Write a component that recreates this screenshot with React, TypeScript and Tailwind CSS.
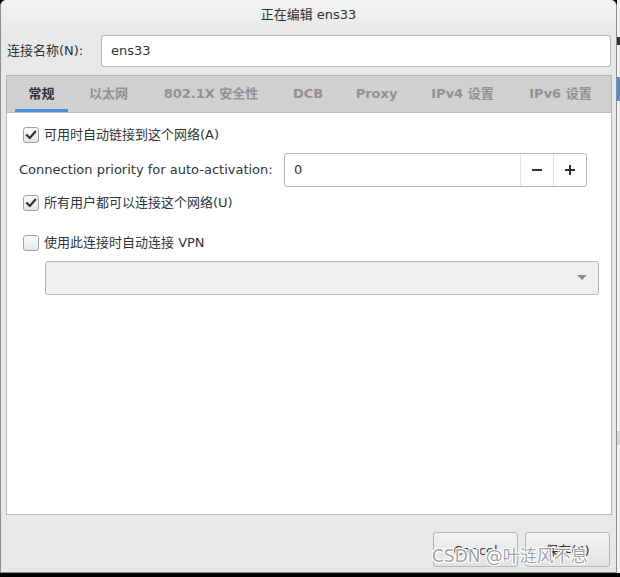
import React from "react";

const FONT = { fontFamily: '"DejaVu Sans", "Noto Sans CJK SC", sans-serif' };

function CheckBox({ checked }: { checked: boolean }) {
  return (
    <div className="w-[16px] h-[16px] rounded-[3px] border border-[#a1a1a1] bg-gradient-to-b from-[#fcfcfc] to-[#e6e6e6] flex items-center justify-center shrink-0">
      {checked && (
        <svg width="12" height="12" viewBox="0 0 12 12">
          <path d="M2 6.2 L4.8 9 L10.2 2.8" fill="none" stroke="#2e3436" strokeWidth="2.2" strokeLinecap="square" />
        </svg>
      )}
    </div>
  );
}

const tabs: { label: string; w: string; active?: boolean }[] = [
  { label: "常规", w: "w-[53px]", active: true },
  { label: "以太网", w: "w-[67px]" },
  { label: "802.1X 安全性", w: "w-[124px]" },
  { label: "DCB", w: "w-[56px]" },
  { label: "Proxy", w: "w-[67px]" },
  { label: "IPv4 设置", w: "w-[91px]" },
  { label: "IPv6 设置", w: "w-[91px]" },
];

export default function App() {
  return (
    <div className="w-[620px] h-[577px] bg-black flex flex-col overflow-hidden text-[13px] text-[#2e3436]" style={FONT}>
      <div className="flex h-[573px]">
        <div className="w-[617px] h-full flex flex-col bg-[#e8e8e8] border-l border-r border-b border-[#8f8f8f] rounded-t-[6px] relative">
          {/* title bar */}
          <div className="h-[30px] shrink-0 rounded-t-[6px] bg-gradient-to-b from-[#f4f4f4] to-[#e8e8e8] flex items-center justify-center">
            <span>正在编辑 ens33</span>
          </div>
          {/* name row */}
          <div className="mt-[5px] h-[32px] flex items-center shrink-0">
            <div className="w-[100px] pl-[6px]">连接名称(N):</div>
            <div className="w-[510px] h-[32px] bg-white border border-[#b6b6b3] rounded-[3px] flex items-center pl-[9px]">
              ens33
            </div>
          </div>
          {/* notebook */}
          <div className="mt-[8px] ml-[5px] w-[606px] h-[440px] border border-[#b6b6b3] flex flex-col shrink-0">
            <div className="h-[37px] bg-[#d0d0d0] border-b border-[#bdbdbd] flex items-stretch pl-[8px] gap-[7px] shrink-0">
              {tabs.map((t) => (
                <div
                  key={t.label}
                  className={`${t.w} flex items-center justify-center font-bold ${
                    t.active ? "text-[#2e3436] border-b-[3px] border-[#4a90d9] pt-[3px]" : "text-[#929292]"
                  }`}
                >
                  {t.label}
                </div>
              ))}
            </div>
            <div className="flex-1 bg-white flex flex-col">
              <div className="mt-[12px] h-[20px] flex items-center pl-[16px] gap-[5px]">
                <CheckBox checked />
                <span>可用时自动链接到这个网络(A)</span>
              </div>
              <div className="mt-[8px] h-[34px] flex items-center pl-[12px]">
                <div className="w-[265px]">Connection priority for auto-activation:</div>
                <div className="w-[303px] h-[34px] border border-[#b6b6b3] rounded-[3px] bg-white flex">
                  <div className="flex-1 flex items-center pl-[9px]">0</div>
                  <div className="w-[33px] border-l border-[#e3e3e3] flex items-center justify-center">
                    <svg width="12" height="12" viewBox="0 0 12 12">
                      <rect x="1" y="5" width="10" height="2" fill="#2e3436" />
                    </svg>
                  </div>
                  <div className="w-[33px] border-l border-[#e3e3e3] flex items-center justify-center">
                    <svg width="12" height="12" viewBox="0 0 12 12">
                      <rect x="1" y="5" width="10" height="2" fill="#2e3436" />
                      <rect x="5" y="1" width="2" height="10" fill="#2e3436" />
                    </svg>
                  </div>
                </div>
              </div>
              <div className="mt-[6px] h-[20px] flex items-center pl-[16px] gap-[5px]">
                <CheckBox checked />
                <span>所有用户都可以连接这个网络(U)</span>
              </div>
              <div className="mt-[20px] h-[20px] flex items-center pl-[16px] gap-[5px]">
                <CheckBox checked={false} />
                <span>使用此连接时自动连接 VPN</span>
              </div>
              <div className="mt-[8px] ml-[38px] w-[554px] h-[34px] bg-[#efefef] border border-[#b6b6b3] rounded-[3px] flex items-center justify-end pr-[11px]">
                <svg width="10" height="6" viewBox="0 0 10 6">
                  <path d="M0 0 L10 0 L5 5 Z" fill="#8b8b8b" />
                </svg>
              </div>
            </div>
          </div>
          {/* buttons */}
          <div className="mt-[17px] flex justify-end gap-[7px] pr-[6px]">
            <div className="w-[85px] h-[35px] rounded-[3px] border border-[#b6b6b3] bg-gradient-to-b from-[#f2f2f2] to-[#e3e3e3] flex items-start justify-center pt-[8px]">
              Cancel
            </div>
            <div className="w-[85px] h-[35px] rounded-[3px] border border-[#b6b6b3] bg-gradient-to-b from-[#f2f2f2] to-[#e3e3e3] flex items-start justify-center pt-[8px]">
              保存(S)
            </div>
          </div>
          {/* watermark */}
          <div
            className="absolute left-[431px] top-[546px] text-[17px] leading-[20px] text-[#8a8a8a]/80 whitespace-nowrap pointer-events-none"
            style={{ textShadow: "1px 1px 0 #fff, -1px -1px 0 #fff, 1px -1px 0 #fff, -1px 1px 0 #fff" }}
          >
            CSDN @叶涟风不息
          </div>
        </div>
        {/* background sliver */}
        <div className="flex-1 bg-[#f2f2f2] flex flex-col">
          <div className="h-[37px]" />
          <div className="h-[8px] bg-[#2f2f2f]" />
          <div className="h-[32px]" />
          <div className="h-[24px] bg-[#4a90d9]" />
          <div className="h-[330px]" />
          <div className="h-[14px] bg-[#d8d8d8]" />
          <div className="flex-1" />
        </div>
      </div>
    </div>
  );
}
